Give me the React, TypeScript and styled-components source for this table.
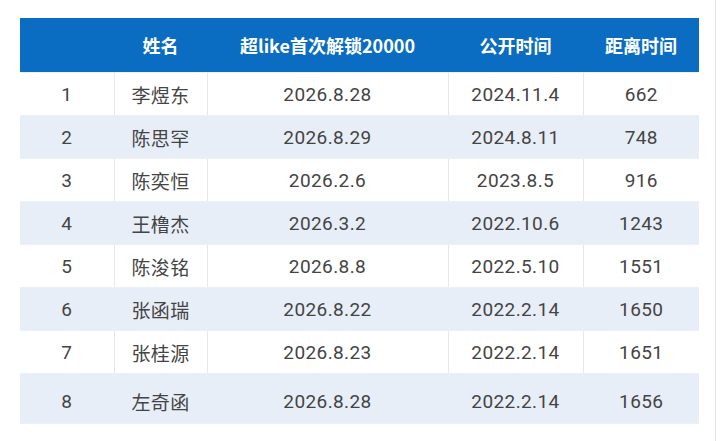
import React from "react";
import styled, { createGlobalStyle } from "styled-components";

const Global = createGlobalStyle`
  html, body { margin: 0; padding: 0; background: #ffffff; }
  body { font-family: "Roboto", "Noto Sans CJK SC", sans-serif; }
`;

const Page = styled.div`
  width: 716px;
  height: 441px;
  box-sizing: border-box;
  border-right: 1px solid #e2e2e2;
  padding: 18px 0 0 20px;
`;

const Table = styled.table`
  border-collapse: collapse;
  table-layout: fixed;
  width: 679px;
`;

const HeadCell = styled.th<{ $w: number }>`
  width: ${(p) => p.$w}px;
  height: 54px;
  padding: 0;
  background: #0b6dc1;
  color: #ffffff;
  font-family: "Noto Sans CJK SC", "Roboto", sans-serif;
  font-weight: 700;
  font-size: 18px;
  text-align: center;
  vertical-align: middle;
`;

const Row = styled.tr<{ $shade: boolean; $last: boolean }>`
  height: ${(p) => (p.$last ? 50 : 43)}px;
  background: ${(p) => (p.$shade ? "#e8eef7" : "#ffffff")};
  & > td {
    padding-top: ${(p) => (p.$last ? 5 : 0)}px;
    border-left-color: ${(p) => (p.$shade ? "#e8eef7" : "#e7e8ea")};
    border-right-color: ${(p) => (p.$shade ? "#e8eef7" : "#e7e8ea")};
  }
`;

const Cell = styled.td`
  padding: 0;
  border: 1px solid #e7e8ea;
  border-top-color: #edf0f4;
  border-bottom-color: #edf0f4;
  color: #444444;
  font-size: 19px;
  letter-spacing: 0.4px;
  text-align: center;
  vertical-align: middle;
  font-family: "Roboto", "Noto Sans CJK SC", sans-serif;
  &:first-child { border-left: none; }
  &:last-child { border-right: none; }
`;

const cols = [
  { label: "", w: 94 },
  { label: "姓名", w: 93 },
  { label: "超like首次解锁20000", w: 241 },
  { label: "公开时间", w: 135 },
  { label: "距离时间", w: 116 },
];

const rows = [
  ["1", "李煜东", "2026.8.28", "2024.11.4", "662"],
  ["2", "陈思罕", "2026.8.29", "2024.8.11", "748"],
  ["3", "陈奕恒", "2026.2.6", "2023.8.5", "916"],
  ["4", "王橹杰", "2026.3.2", "2022.10.6", "1243"],
  ["5", "陈浚铭", "2026.8.8", "2022.5.10", "1551"],
  ["6", "张函瑞", "2026.8.22", "2022.2.14", "1650"],
  ["7", "张桂源", "2026.8.23", "2022.2.14", "1651"],
  ["8", "左奇函", "2026.8.28", "2022.2.14", "1656"],
];

export default function App() {
  return (
    <>
      <Global />
      <Page>
        <Table>
          <thead>
            <tr>
              {cols.map((c, i) => (
                <HeadCell key={i} $w={c.w}>
                  {c.label}
                </HeadCell>
              ))}
            </tr>
          </thead>
          <tbody>
            {rows.map((r, i) => (
              <Row key={i} $shade={i % 2 === 1} $last={i === rows.length - 1}>
                {r.map((v, j) => (
                  <Cell key={j}>{v}</Cell>
                ))}
              </Row>
            ))}
          </tbody>
        </Table>
      </Page>
    </>
  );
}
